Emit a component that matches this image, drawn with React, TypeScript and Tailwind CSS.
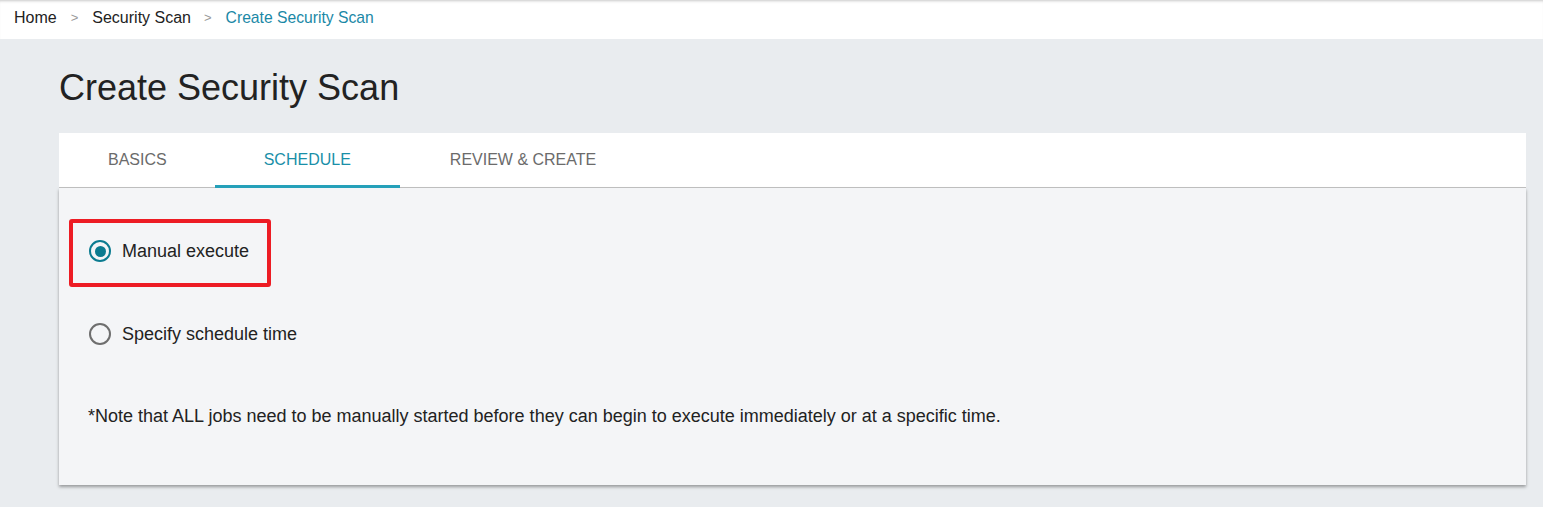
import React from "react";

function Radio({ checked }: { checked: boolean }) {
  return (
    <span
      className={
        "flex h-[22px] w-[22px] shrink-0 items-center justify-center rounded-full border-2 " +
        (checked ? "border-[#0b7b90]" : "border-[#6e6e6e]")
      }
    >
      {checked && <span className="h-[11px] w-[11px] rounded-full bg-[#0b7b90]" />}
    </span>
  );
}

export default function App() {
  return (
    <div
      className="min-h-screen bg-[#e9ecef] text-[#222]"
      style={{ fontFamily: '"Liberation Sans", Arial, sans-serif' }}
    >
      <div className="flex h-[39px] items-center bg-white pb-[4px] pl-[14px] text-[16px] shadow-[inset_0_3px_3px_-2px_rgba(0,0,0,0.22)]">
        <span className="text-[#222]">Home</span>
        <span className="mx-[14px] text-[13px] text-[#9a9a9a]">&gt;</span>
        <span className="text-[#222]">Security Scan</span>
        <span className="ml-[13px] mr-[14px] text-[13px] text-[#9a9a9a]">&gt;</span>
        <span className="text-[15.7px] text-[#1a88a6]">Create Security Scan</span>
      </div>

      <div className="pl-[59px] pr-[17px]">
        <h1 className="mt-[31px] mb-[27px] text-[36px] leading-[36px] font-normal text-[#222]">
          Create Security Scan
        </h1>

        <div className="flex h-[55px] border-b border-[#c2c2c2] bg-white text-[16px]">
          <div className="relative flex items-center pl-[49px] pr-[48px] text-[#6b6b6b]">BASICS</div>
          <div className="relative flex items-center px-[49px] text-[#1a8fa8]">
            SCHEDULE
            <span className="absolute bottom-[-1px] left-0 right-0 h-[3px] bg-[#25a0b9]" />
          </div>
          <div className="relative flex items-center px-[50px] text-[#6b6b6b]">REVIEW &amp; CREATE</div>
        </div>

        <div className="bg-[#f4f5f7] pt-[52px] pb-[58px] text-[18px] shadow-[0_2px_3px_rgba(0,0,0,0.35)]">
          <div className="relative flex h-[22px] items-center pl-[30px]">
            <Radio checked />
            <span className="ml-[11px] leading-[22px] text-[#222]">Manual execute</span>
            <span className="absolute left-[10px] top-[-21px] h-[68px] w-[202px] rounded-[3px] border-4 border-[#ed1c24]" />
          </div>
          <div className="mt-[61px] flex h-[22px] items-center pl-[30px]">
            <Radio checked={false} />
            <span className="ml-[11px] leading-[22px] text-[#222]">Specify schedule time</span>
          </div>
          <p className="mt-[60px] pl-[29px] leading-[22px] text-[#222]">
            *Note that ALL jobs need to be manually started before they can begin to execute immediately or at a specific time.
          </p>
        </div>
      </div>
    </div>
  );
}
